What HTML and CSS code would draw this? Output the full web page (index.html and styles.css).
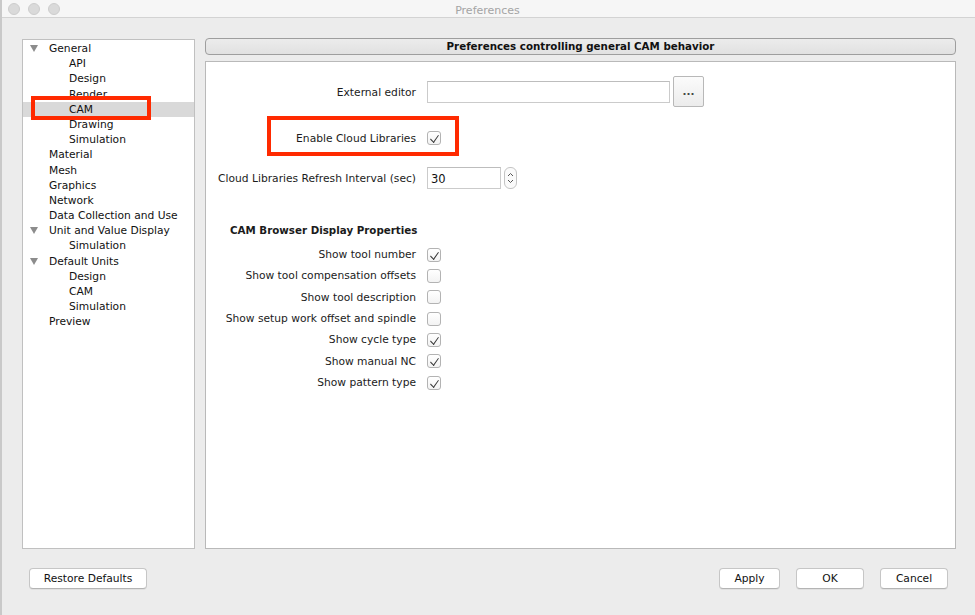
FILE: index.html
```html
<!DOCTYPE html>
<html lang="en">
<head>
<meta charset="utf-8">
<title>Preferences</title>
<link rel="stylesheet" href="styles.css">
</head>
<body>
<div class="window">
  <div class="titlebar">
    <div class="lights"><span></span><span></span><span></span></div>
    <div class="title">Preferences</div>
  </div>

  <div class="main">
    <div class="tree">
      <div class="node top open"><i class="tri"></i>General</div>
      <div class="node child">API</div>
      <div class="node child">Design</div>
      <div class="node child">Render</div>
      <div class="node child selected">CAM</div>
      <div class="node child">Drawing</div>
      <div class="node child">Simulation</div>
      <div class="node top">Material</div>
      <div class="node top">Mesh</div>
      <div class="node top">Graphics</div>
      <div class="node top">Network</div>
      <div class="node top">Data Collection and Use</div>
      <div class="node top open"><i class="tri"></i>Unit and Value Display</div>
      <div class="node child">Simulation</div>
      <div class="node top open"><i class="tri"></i>Default Units</div>
      <div class="node child">Design</div>
      <div class="node child">CAM</div>
      <div class="node child">Simulation</div>
      <div class="node top">Preview</div>
      <div class="mark mark-tree"></div>
    </div>

    <div class="pane">
      <div class="pane-header">Preferences controlling general CAM behavior</div>
      <div class="pane-body">
        <div class="row row-editor">
          <label class="lbl">External editor</label>
          <div class="ctl">
            <input class="field field-wide" type="text">
            <button class="browse">...</button>
          </div>
        </div>

        <div class="row row-cloud">
          <label class="lbl">Enable Cloud Libraries</label>
          <div class="ctl"><span class="cb on"></span></div>
        </div>

        <div class="row row-interval">
          <label class="lbl">Cloud Libraries Refresh Interval (sec)</label>
          <div class="ctl">
            <input class="field field-num" type="text" value="30">
            <span class="spin">
              <svg width="9" height="18" viewBox="0 0 9 18"><path d="M2 7 L4.5 4.5 L7 7" fill="none" stroke="#555" stroke-width="1"/><path d="M2 11 L4.5 13.5 L7 11" fill="none" stroke="#555" stroke-width="1"/></svg>
            </span>
          </div>
        </div>

        <div class="section">CAM Browser Display Properties</div>

        <div class="checks">
          <div class="row check"><label class="lbl">Show tool number</label><div class="ctl"><span class="cb on"></span></div></div>
          <div class="row check"><label class="lbl">Show tool compensation offsets</label><div class="ctl"><span class="cb"></span></div></div>
          <div class="row check"><label class="lbl">Show tool description</label><div class="ctl"><span class="cb"></span></div></div>
          <div class="row check"><label class="lbl">Show setup work offset and spindle</label><div class="ctl"><span class="cb"></span></div></div>
          <div class="row check"><label class="lbl">Show cycle type</label><div class="ctl"><span class="cb on"></span></div></div>
          <div class="row check"><label class="lbl">Show manual NC</label><div class="ctl"><span class="cb on"></span></div></div>
          <div class="row check"><label class="lbl">Show pattern type</label><div class="ctl"><span class="cb on"></span></div></div>
        </div>

        <div class="mark mark-cloud"></div>
      </div>
    </div>
  </div>

  <div class="footer">
    <button class="btn btn-restore">Restore Defaults</button>
    <div class="footer-right">
      <button class="btn btn-apply">Apply</button>
      <button class="btn btn-ok">OK</button>
      <button class="btn btn-cancel">Cancel</button>
    </div>
  </div>
</div>
</body>
</html>
```

FILE: styles.css
```css
* { box-sizing: border-box; }

html, body {
  margin: 0;
  padding: 0;
  width: 975px;
  height: 615px;
  overflow: hidden;
  background: #ececec;
  font-family: "DejaVu Sans", "Open Sans", sans-serif;
  font-size: 10.7px;
  color: #1b1b1b;
}

.window {
  width: 975px;
  height: 615px;
  border-left: 2px solid #c9c9c9;
  background: #ececec;
  display: flex;
  flex-direction: column;
}

/* ---- title bar ---- */
.titlebar {
  height: 18px;
  flex: none;
  background: #f6f6f6;
  border-bottom: 1px solid #d3d3d3;
  position: relative;
  display: flex;
  align-items: center;
  justify-content: center;
}
.lights {
  position: absolute;
  left: 6px;
  top: 3px;
  display: flex;
  gap: 8px;
}
.lights span {
  width: 12px;
  height: 12px;
  border-radius: 50%;
  background: #dadada;
  border: 1px solid #cdcdcd;
}
.title {
  color: #a4a4a4;
  font-size: 11px;
  margin-left: -2px;
  padding-top: 3px;
}

/* ---- main area ---- */
.main {
  flex: none;
  display: grid;
  grid-template-columns: 173px 751px;
  column-gap: 10px;
  padding: 20px 0 0 20px;
  height: 531px;
}

.tree {
  position: relative;
  margin-top: 1px;
  background: #fff;
  border: 1px solid #c0c0c0;
  padding-top: 1px;
}
.node {
  height: 15.2px;
  line-height: 15.2px;
  white-space: nowrap;
  position: relative;
  color: #111;
}
.node.top { padding-left: 26px; }
.node.child { padding-left: 46px; }
.node.selected { background: #d9d9d9; }
.tri {
  position: absolute;
  left: 7px;
  top: 4px;
  width: 0;
  height: 0;
  border-left: 4px solid transparent;
  border-right: 4px solid transparent;
  border-top: 7px solid #8c8c8c;
}

.mark {
  position: absolute;
  border: 4px solid #ff2a00;
  pointer-events: none;
}
.mark-tree {
  left: 8px;
  top: 56px;
  width: 120px;
  height: 24px;
}

/* ---- right pane ---- */
.pane {
  display: flex;
  flex-direction: column;
}
.pane-header {
  height: 17px;
  border: 1px solid #9e9e9e;
  border-radius: 4px;
  background: linear-gradient(#ececec, #e1e1e1);
  font-weight: bold;
  text-align: center;
  line-height: 15px;
  font-size: 10.3px;
  color: #111;
}
.pane-body {
  position: relative;
  margin-top: 6px;
  flex: 1;
  background: #fff;
  border: 1px solid #b9b9b9;
  padding-top: 14px;
}

.row {
  display: grid;
  grid-template-columns: 210px auto;
  column-gap: 11px;
  align-items: center;
}
.lbl {
  text-align: right;
  white-space: nowrap;
}
.ctl {
  display: flex;
  align-items: center;
}

.row-editor { height: 30px; }
.row-editor .lbl { padding-top: 2px; }
.row-cloud { height: 16px; margin-top: 24px; }
.row-interval { height: 22px; margin-top: 21px; }

.field {
  height: 22px;
  border: 1px solid #cbcbcb;
  border-top-color: #bdbdbd;
  background: #fff;
  font: inherit;
  font-size: 11.5px;
  padding: 1px 3px 0;
  color: #111;
  outline: none;
}
.field-wide { width: 243px; }
.field-num { width: 74px; height: 22px; }

.browse {
  margin-left: 3px;
  width: 31px;
  height: 31px;
  border: 1px solid #b8b8b8;
  border-radius: 2px;
  background: linear-gradient(#fbfbfb, #ececec);
  font: inherit;
  font-size: 10.5px;
  font-weight: bold;
  color: #444;
  padding: 0 0 2px;
}

.spin {
  margin-left: 3px;
  width: 13px;
  height: 22px;
  border: 1px solid #c4c4c4;
  border-radius: 6px;
  background: #fafafa;
  display: flex;
  align-items: center;
  justify-content: center;
}

.section {
  margin-top: 33px;
  height: 16px;
  line-height: 16px;
  padding-left: 24px;
  font-weight: bold;
  font-size: 10.3px;
}

.checks { margin-top: 6px; }
.row.check { height: 21.33px; }

.cb {
  width: 14px;
  height: 14px;
  border: 1px solid #b3b3b3;
  border-radius: 3px;
  background: linear-gradient(#ffffff, #f3f3f3);
  position: relative;
}
.cb.on::after {
  content: "";
  position: absolute;
  top: 3px;
  left: 2px;
  width: 8px;
  height: 4px;
  border-left: 1.6px solid #333;
  border-bottom: 1.6px solid #333;
  transform: rotate(-55deg) skewX(-10deg);
  transform-origin: 50% 50%;
}

.mark-cloud {
  left: 61px;
  top: 54px;
  width: 192px;
  height: 40px;
}

/* ---- footer ---- */
.footer {
  flex: none;
  display: flex;
  justify-content: space-between;
  align-items: flex-start;
  padding: 19px 27px 0 27px;
}
.footer-right {
  display: flex;
  gap: 16px;
}
.btn {
  height: 21px;
  border: 1px solid #c6c6c6;
  border-bottom-color: #b4b4b4;
  border-radius: 4px;
  background: #fff;
  box-shadow: 0 1px 0 rgba(0,0,0,0.05);
  font: inherit;
  font-size: 10.7px;
  color: #111;
  padding: 0;
}
.btn-restore { width: 118px; }
.btn-apply { width: 61px; }
.btn-ok { width: 68px; }
.btn-cancel { width: 68px; }
```
